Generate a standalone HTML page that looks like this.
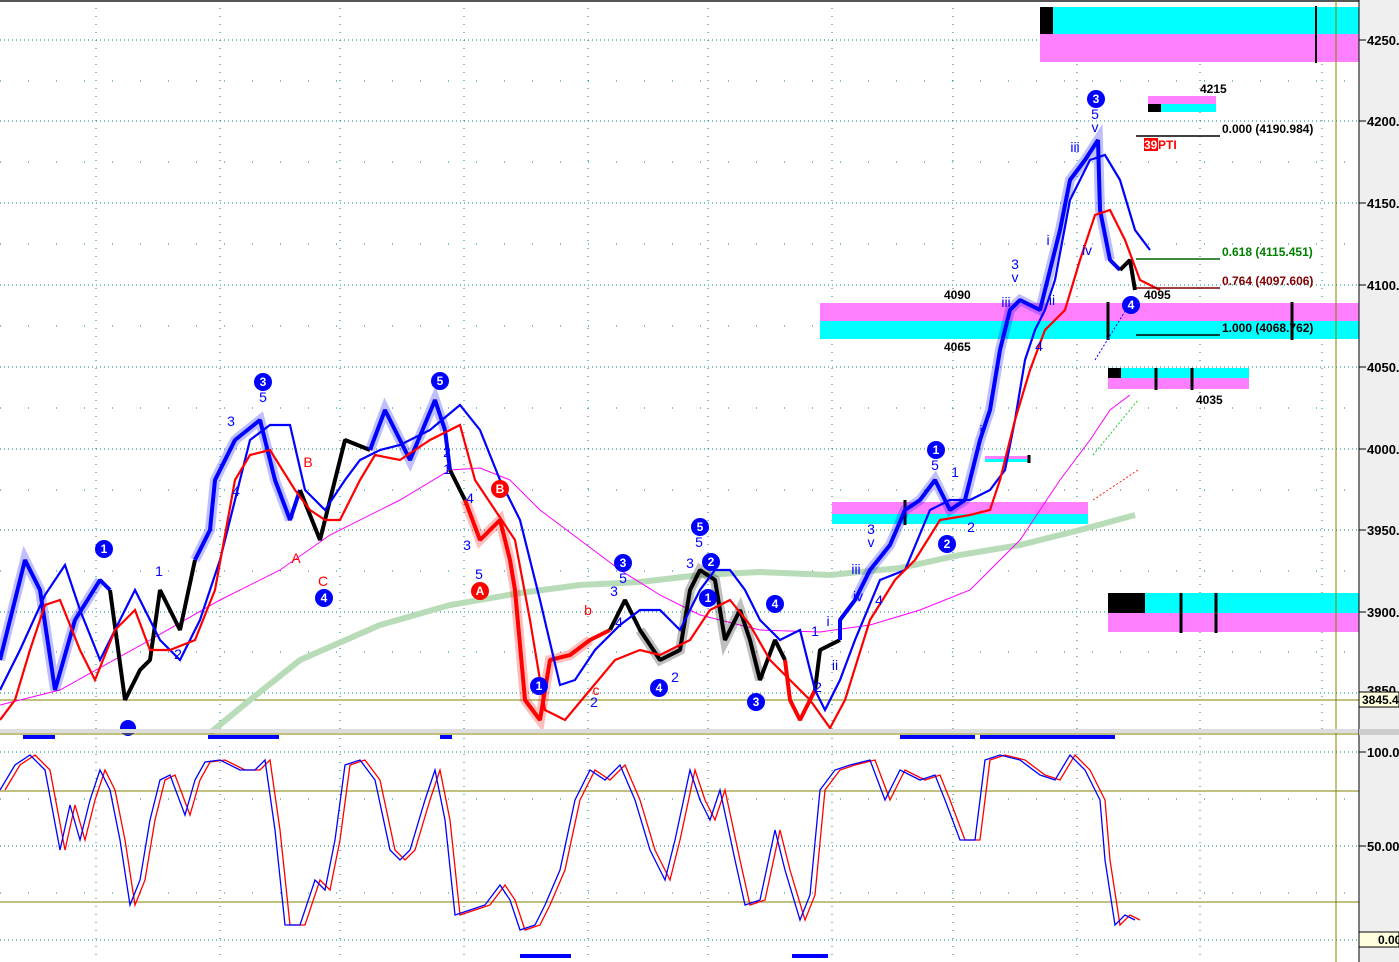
<!DOCTYPE html>
<html><head><meta charset="utf-8"><style>
html,body{margin:0;padding:0;background:#fff}
svg{display:block}
text{font-family:"Liberation Sans",sans-serif}
</style></head><body>
<svg width="1399" height="962" viewBox="0 0 1399 962" xmlns="http://www.w3.org/2000/svg">
<rect width="1399" height="962" fill="#fff"/>
<rect x="1359" y="0" width="40" height="962" fill="#efefef"/>
<line x1="0" y1="1" x2="1359" y2="1" stroke="#555" stroke-width="2"/>
<g stroke="#008080" stroke-width="1" stroke-dasharray="1 3">
<line x1="0" y1="40" x2="1359" y2="40"/><line x1="0" y1="121" x2="1359" y2="121"/>
<line x1="0" y1="203" x2="1359" y2="203"/><line x1="0" y1="285" x2="1359" y2="285"/>
<line x1="0" y1="367" x2="1359" y2="367"/><line x1="0" y1="449" x2="1359" y2="449"/>
<line x1="0" y1="530" x2="1359" y2="530"/><line x1="0" y1="612" x2="1359" y2="612"/>
<line x1="0" y1="693" x2="1359" y2="693"/>
<line x1="0" y1="752" x2="1359" y2="752"/><line x1="0" y1="846" x2="1359" y2="846"/><line x1="0" y1="940" x2="1359" y2="940"/>
</g>
<g stroke="#008080" stroke-width="1" stroke-dasharray="1 27">
<line x1="0" y1="81" x2="1359" y2="81"/><line x1="0" y1="162" x2="1359" y2="162"/><line x1="0" y1="244" x2="1359" y2="244"/>
<line x1="0" y1="326" x2="1359" y2="326"/><line x1="0" y1="408" x2="1359" y2="408"/><line x1="0" y1="490" x2="1359" y2="490"/>
<line x1="0" y1="571" x2="1359" y2="571"/><line x1="0" y1="652" x2="1359" y2="652"/>
<line x1="0" y1="799" x2="1359" y2="799"/><line x1="0" y1="893" x2="1359" y2="893"/>
</g>
<g stroke="#008080" stroke-width="1" stroke-dasharray="1 7">
<line x1="96" y1="0" x2="96" y2="730"/><line x1="220" y1="0" x2="220" y2="730"/><line x1="340" y1="0" x2="340" y2="730"/>
<line x1="464" y1="0" x2="464" y2="730"/><line x1="588" y1="0" x2="588" y2="730"/><line x1="708" y1="0" x2="708" y2="730"/>
<line x1="832" y1="0" x2="832" y2="730"/><line x1="953" y1="0" x2="953" y2="730"/><line x1="1077" y1="0" x2="1077" y2="730"/>
<line x1="1200" y1="0" x2="1200" y2="730"/><line x1="1322" y1="0" x2="1322" y2="730"/>
<line x1="96" y1="738" x2="96" y2="962"/><line x1="220" y1="738" x2="220" y2="962"/><line x1="340" y1="738" x2="340" y2="962"/>
<line x1="464" y1="738" x2="464" y2="962"/><line x1="588" y1="738" x2="588" y2="962"/><line x1="708" y1="738" x2="708" y2="962"/>
<line x1="832" y1="738" x2="832" y2="962"/><line x1="953" y1="738" x2="953" y2="962"/><line x1="1077" y1="738" x2="1077" y2="962"/>
<line x1="1200" y1="738" x2="1200" y2="962"/>
</g>
<rect x="1040" y="7" width="13" height="27" fill="#000"/><rect x="1053" y="7" width="306" height="27" fill="#00ffff"/>
<rect x="1040" y="34" width="319" height="28" fill="#ff80ff"/>
<line x1="1316" y1="6" x2="1316" y2="63" stroke="#000" stroke-width="2"/>
<rect x="1148" y="96" width="68" height="8" fill="#ff80ff"/><rect x="1148" y="104" width="13" height="8" fill="#000"/><rect x="1161" y="104" width="55" height="8" fill="#00ffff"/>
<rect x="820" y="303" width="539" height="18" fill="#ff80ff"/><rect x="820" y="321" width="539" height="18" fill="#00ffff"/>
<rect x="1108" y="368" width="13" height="10" fill="#000"/><rect x="1121" y="368" width="128" height="10" fill="#00ffff"/><rect x="1108" y="378" width="141" height="11" fill="#ff80ff"/>
<rect x="832" y="502" width="256" height="12" fill="#ff80ff"/><rect x="832" y="514" width="256" height="10" fill="#00ffff"/>
<rect x="1108" y="593" width="37" height="20" fill="#000"/><rect x="1145" y="593" width="214" height="20" fill="#00ffff"/><rect x="1108" y="613" width="251" height="19" fill="#ff80ff"/>
<rect x="985" y="456" width="45" height="3" fill="#ff80ff"/><rect x="985" y="459" width="45" height="3" fill="#00ffff"/>
<g stroke="#000" stroke-width="3">
<line x1="1108" y1="302" x2="1108" y2="340"/><line x1="1292" y1="302" x2="1292" y2="340"/>
<line x1="1156" y1="368" x2="1156" y2="390"/><line x1="1192" y1="368" x2="1192" y2="390"/>
<line x1="1181" y1="593" x2="1181" y2="633"/><line x1="1216" y1="593" x2="1216" y2="633"/>
<line x1="1029" y1="455" x2="1029" y2="463"/><line x1="905" y1="500" x2="905" y2="525"/>
</g>
<line x1="0" y1="700" x2="1359" y2="700" stroke="#808000"/>
<line x1="0" y1="791" x2="1359" y2="791" stroke="#808000"/>
<line x1="0" y1="902" x2="1359" y2="902" stroke="#808000"/>
<line x1="1336" y1="0" x2="1336" y2="962" stroke="#808000"/>
<polyline fill="none" stroke="#b8dcb8" stroke-width="6" points="210,733 250,700 300,660 380,625 450,605 520,593 580,585 640,582 700,575 760,572 830,575 900,568 960,555 1020,545 1080,530 1135,515"/>
<polyline fill="none" stroke="#ff00ff" stroke-width="1" points="0,705 60,690 150,640 220,600 280,570 330,535 400,500 450,470 480,468 510,480 540,510 580,540 620,570 660,595 700,615 760,630 820,632 870,625 920,610 970,590 1020,540 1060,480 1090,440 1110,410 1130,395"/>
<g fill="none" stroke-width="4" stroke-linejoin="bevel">
<polyline stroke="#0000ff" points="0,660 25,560 40,590 55,690 75,620 100,580 110,590"/>
<polyline stroke="#000" points="110,590 125,700 140,670 150,660 160,590 180,630 195,560"/>
<polyline stroke="#0000ff" points="195,560 210,530 215,480 235,440 260,420 275,480 290,520 300,490"/>
<polyline stroke="#000" points="300,490 320,540 330,500 345,440 370,450"/>
<polyline stroke="#0000ff" points="370,450 385,410 410,460 435,400 445,430 450,470"/>
<polyline stroke="#000" points="450,470 465,500"/>
<polyline stroke="#ff0000" points="465,500 480,540 500,520 510,560 515,590 525,700 540,720 550,660 570,655 590,640 610,630"/>
<polyline stroke="#000" points="610,630 625,600 640,630 660,660 680,650 690,590 700,570 715,580 725,640 740,610 750,640 760,680 775,640 785,660"/>
<polyline stroke="#ff0000" points="785,660 790,700 800,720 815,690"/>
<polyline stroke="#000" points="815,690 820,650 840,640"/>
<polyline stroke="#0000ff" points="840,640 840,620 855,600 870,570 890,545 905,510 920,500 935,480 950,510 965,500 980,440 990,410 1000,350 1010,310 1020,300 1040,310 1050,270 1060,230 1070,180 1085,160 1098,140 1100,210 1110,260 1120,270"/>
<polyline stroke="#000" points="1120,270 1130,260 1135,290"/>
</g>
<g fill="none" stroke-width="10" stroke-opacity="0.25">
<polyline stroke="#0000ff" points="0,660 25,560 40,590 55,690 75,620 100,580"/>
<polyline stroke="#0000ff" points="195,560 210,530 215,480 235,440 260,420 275,480 290,520"/>
<polyline stroke="#0000ff" points="370,450 385,410 410,460 435,400 445,430"/>
<polyline stroke="#ff0000" points="465,500 480,540 500,520 510,560 515,590 525,700 540,720 550,660 570,655 590,640"/>
<polyline stroke="#000" points="640,630 660,660 680,650 690,590 700,570 715,580 725,640 740,610 750,640 760,680"/>
<polyline stroke="#0000ff" points="855,600 870,570 890,545 905,510 920,500 935,480 950,510 965,500 980,440 990,410 1000,350 1010,310 1020,300 1040,310 1050,270 1060,230 1070,180 1085,160 1098,140 1100,210 1110,260"/>
</g>
<polyline fill="none" stroke="#0000ff" stroke-width="2.2" points="0,690 20,650 45,595 65,565 80,610 100,660 120,620 135,590 160,640 180,660 200,620 220,560 235,500 250,440 270,425 290,425 305,490 325,510 345,480 360,460 380,450 400,445 430,430 460,405 480,430 500,480 520,520 540,600 560,685 575,680 595,650 620,625 640,610 660,610 680,630 700,590 715,570 730,570 745,590 760,620 780,640 800,630 815,690 825,710 840,680 855,640 880,580 905,570 930,510 950,500 970,500 990,490 1005,470 1015,420 1025,360 1035,330 1045,310 1055,280 1070,200 1090,160 1105,155 1120,180 1135,230 1150,250"/>
<polyline fill="none" stroke="#ff0000" stroke-width="2.2" points="0,720 15,700 30,650 45,605 60,600 80,650 95,680 115,630 135,610 150,650 170,650 195,640 215,590 235,480 250,455 270,450 295,490 310,510 325,520 340,520 360,480 375,455 400,460 430,440 460,425 475,480 495,510 515,540 530,620 545,710 565,720 590,690 615,660 640,650 660,655 690,640 710,610 730,600 750,625 770,660 790,680 810,700 830,728 845,700 870,620 895,580 915,560 940,520 970,515 990,510 1000,480 1015,420 1030,370 1045,330 1065,310 1080,260 1095,215 1110,210 1125,240 1140,280 1160,290"/>
<g stroke-width="1" fill="none">
<line x1="1093" y1="455" x2="1138" y2="400" stroke="#22cc22" stroke-dasharray="2 2"/>
<line x1="1093" y1="500" x2="1138" y2="470" stroke="#ff2222" stroke-dasharray="2 2"/>
<line x1="1095" y1="360" x2="1132" y2="300" stroke="#0000ff" stroke-dasharray="2 2"/>
</g>
<g stroke-width="1.5">
<line x1="1136" y1="136" x2="1220" y2="136" stroke="#000"/>
<line x1="1136" y1="259" x2="1220" y2="259" stroke="#006400"/>
<line x1="1136" y1="288" x2="1220" y2="288" stroke="#800000"/>
<line x1="1136" y1="335" x2="1220" y2="335" stroke="#000"/>
</g>
<g font-size="12" font-weight="bold">
<text x="1222" y="133" fill="#000">0.000 (4190.984)</text>
<text x="1222" y="256" fill="#008000">0.618 (4115.451)</text>
<text x="1222" y="285" fill="#800000">0.764 (4097.606)</text>
<text x="1222" y="332" fill="#000">1.000 (4068.762)</text>
<rect x="1144" y="138" width="14" height="13" fill="#ff0000"/>
<text x="1144" y="149" fill="#fff">39</text><text x="1158" y="149" fill="#ff0000">PTI</text>
<text x="1200" y="93" fill="#000">4215</text>
<text x="1144" y="299" fill="#000">4095</text>
<text x="944" y="299" fill="#000">4090</text>
<text x="944" y="351" fill="#000">4065</text>
<text x="1196" y="404" fill="#000">4035</text>
</g>
<g fill="#0000ff">
<circle cx="104" cy="549" r="9"/><circle cx="263" cy="382" r="9"/><circle cx="324" cy="598" r="9"/><circle cx="440" cy="381" r="9"/>
<circle cx="539" cy="686" r="9"/><circle cx="623" cy="563" r="9"/><circle cx="700" cy="527" r="9"/><circle cx="711" cy="562" r="9"/>
<circle cx="708" cy="598" r="9"/><circle cx="659" cy="688" r="9"/><circle cx="775" cy="604" r="9"/><circle cx="756" cy="702" r="9"/>
<circle cx="936" cy="450" r="9"/><circle cx="947" cy="544" r="9"/><circle cx="1096" cy="99" r="9"/><circle cx="1131" cy="305" r="9"/>
<circle cx="128" cy="728" r="8"/>
</g>
<g fill="#fff" font-size="12" font-weight="bold" text-anchor="middle">
<text x="104" y="553">1</text><text x="263" y="386">3</text><text x="324" y="602">4</text><text x="440" y="385">5</text>
<text x="539" y="690">1</text><text x="623" y="567">3</text><text x="700" y="531">5</text><text x="711" y="566">2</text>
<text x="708" y="602">1</text><text x="659" y="692">4</text><text x="775" y="608">4</text><text x="756" y="706">3</text>
<text x="936" y="454">1</text><text x="947" y="548">2</text><text x="1096" y="103">3</text><text x="1131" y="309">4</text>
</g>
<g fill="#ff0000"><circle cx="500" cy="489" r="9"/><circle cx="480" cy="591" r="9"/></g>
<g fill="#fff" font-size="12" font-weight="bold" text-anchor="middle"><text x="500" y="493">B</text><text x="480" y="595">A</text></g>
<g fill="#0000ff" font-size="14" text-anchor="middle">
<text x="159" y="576">1</text><text x="178" y="659">2</text><text x="231" y="426">3</text><text x="263" y="402">5</text><text x="236" y="496">4</text>
<text x="447" y="457">2</text><text x="447" y="474">1</text><text x="470" y="503">4</text><text x="467" y="550">3</text><text x="479" y="579">5</text>
<text x="623" y="583">5</text><text x="614" y="596">3</text><text x="619" y="627">4</text><text x="594" y="707">2</text><text x="675" y="682">2</text>
<text x="699" y="547">5</text><text x="690" y="568">3</text><text x="815" y="636">1</text><text x="818" y="692">2</text>
<text x="828" y="626">i</text><text x="835" y="670">ii</text><text x="856" y="574">iii</text><text x="858" y="601">iv</text>
<text x="871" y="534">3</text><text x="871" y="547">v</text><text x="879" y="605">4</text>
<text x="935" y="470">5</text><text x="955" y="477">1</text><text x="971" y="532">2</text>
<text x="981" y="435">i</text><text x="1015" y="269">3</text><text x="1015" y="282">v</text><text x="1006" y="307">iii</text>
<text x="1039" y="351">4</text><text x="1048" y="245">i</text><text x="1052" y="305">ii</text><text x="1075" y="152">iii</text>
<text x="1095" y="119">5</text><text x="1095" y="132">v</text><text x="1087" y="255">iv</text>
</g>
<g fill="#ff0000" font-size="14" text-anchor="middle">
<text x="296" y="563">A</text><text x="308" y="467">B</text><text x="323" y="586">C</text><text x="588" y="615">b</text><text x="596" y="695">c</text>
</g>
<rect x="0" y="729" width="1359" height="4" fill="#ddd"/>
<line x1="0" y1="734" x2="1359" y2="734" stroke="#808000"/>
<g fill="#0000ff">
<rect x="23" y="735" width="32" height="4"/><rect x="208" y="735" width="71" height="4"/><rect x="440" y="735" width="12" height="4"/>
<rect x="900" y="735" width="75" height="4"/><rect x="980" y="735" width="135" height="4"/>
<rect x="520" y="954" width="51" height="4"/><rect x="792" y="954" width="36" height="4"/>
</g>
<polyline fill="none" stroke="#ff0000" stroke-width="1.3" transform="translate(5,0)" points="0,790 15,765 30,755 45,770 60,850 70,805 80,840 90,800 100,770 110,790 120,840 130,905 140,880 150,820 160,780 170,775 185,815 195,780 205,762 220,760 240,770 255,770 265,760 275,830 285,925 300,925 315,880 325,890 335,840 345,765 360,760 375,780 390,850 400,860 410,850 425,800 435,770 445,820 455,915 470,910 485,905 500,885 510,900 520,930 535,925 545,905 560,870 575,800 590,770 605,780 620,765 635,800 650,850 665,880 675,840 690,770 700,800 710,820 720,790 735,860 745,905 760,900 775,830 785,870 800,920 810,895 820,790 835,770 850,765 870,760 885,800 900,770 920,780 935,775 945,800 960,840 975,840 985,760 1000,755 1020,760 1040,775 1055,780 1070,755 1085,770 1100,800 1105,860 1115,925 1125,915 1135,920"/>
<polyline fill="none" stroke="#0000ff" stroke-width="1.3" points="0,790 15,765 30,755 45,770 60,850 70,805 80,840 90,800 100,770 110,790 120,840 130,905 140,880 150,820 160,780 170,775 185,815 195,780 205,762 220,760 240,770 255,770 265,760 275,830 285,925 300,925 315,880 325,890 335,840 345,765 360,760 375,780 390,850 400,860 410,850 425,800 435,770 445,820 455,915 470,910 485,905 500,885 510,900 520,930 535,925 545,905 560,870 575,800 590,770 605,780 620,765 635,800 650,850 665,880 675,840 690,770 700,800 710,820 720,790 735,860 745,905 760,900 775,830 785,870 800,920 810,895 820,790 835,770 850,765 870,760 885,800 900,770 920,780 935,775 945,800 960,840 975,840 985,760 1000,755 1020,760 1040,775 1055,780 1070,755 1085,770 1100,800 1105,860 1115,925 1125,915 1135,920"/>
<line x1="1359" y1="0" x2="1359" y2="962" stroke="#000"/>
<rect x="1359" y="729" width="40" height="6" fill="#ccc"/>
<g stroke="#000">
<line x1="1359" y1="40" x2="1366" y2="40"/><line x1="1359" y1="121" x2="1366" y2="121"/><line x1="1359" y1="203" x2="1366" y2="203"/>
<line x1="1359" y1="285" x2="1366" y2="285"/><line x1="1359" y1="367" x2="1366" y2="367"/><line x1="1359" y1="449" x2="1366" y2="449"/>
<line x1="1359" y1="530" x2="1366" y2="530"/><line x1="1359" y1="612" x2="1366" y2="612"/>
<line x1="1359" y1="752" x2="1366" y2="752"/><line x1="1359" y1="846" x2="1366" y2="846"/>
</g>
<g font-size="13" font-weight="bold" fill="#000">
<text x="1367" y="45">4250.</text><text x="1367" y="126">4200.</text><text x="1367" y="208">4150.</text>
<text x="1367" y="290">4100.</text><text x="1367" y="372">4050.</text><text x="1367" y="454">4000.</text>
<text x="1367" y="535">3950.</text><text x="1367" y="617">3900.</text><text x="1367" y="695">3850.</text>
<text x="1367" y="757">100.0</text><text x="1367" y="851">50.00</text>
</g>
<rect x="1359" y="692" width="40" height="15" fill="#ffffe0" stroke="#000"/>
<text x="1362" y="704" font-size="12" font-weight="bold">3845.4</text>
<rect x="1359" y="932" width="40" height="15" fill="#ffffe0" stroke="#000"/>
<text x="1378" y="944" font-size="12" font-weight="bold">0.00</text>
</svg>
</body></html>
